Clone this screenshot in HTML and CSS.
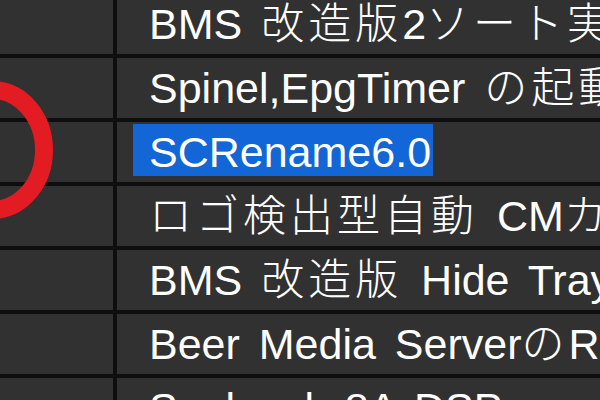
FILE: index.html
```html
<!DOCTYPE html>
<html lang="ja">
<head>
<meta charset="utf-8">
<title>List</title>
<link rel="stylesheet" href="styles.css">
</head>
<body>
<div class="list">
  <div class="row"><div class="c1"></div><div class="c2">BMS <span class="j">改造版</span>2<span class="j">ソート実装</span></div></div>
  <div class="row"><div class="c1"></div><div class="c2">Spinel,EpgTimer <span class="j">の起動</span></div></div>
  <div class="row"><div class="c1"></div><div class="c2"><span class="sel">SCRename6.0</span></div></div>
  <div class="row"><div class="c1"></div><div class="c2"><span class="j">ロゴ検出型自動</span> CM<span class="j">カット</span></div></div>
  <div class="row"><div class="c1"></div><div class="c2">BMS <span class="j">改造版</span> Hide Tray</div></div>
  <div class="row"><div class="c1"></div><div class="c2">Beer Media Server<span class="j">の</span>RSS</div></div>
  <div class="row"><div class="c1"></div><div class="c2">Soulseek 8A DSP</div></div>
</div>
<svg class="mark" width="120" height="260" viewBox="0 0 120 260">
  <ellipse cx="-8" cy="150" rx="52" ry="60" fill="none" stroke="#e31b23" stroke-width="18"/>
</svg>
</body>
</html>
```
FILE: styles.css
```css
html, body {
  margin: 0;
  padding: 0;
  width: 600px;
  height: 400px;
  overflow: hidden;
  background: #313131;
}
body {
  position: relative;
  font-family: "Liberation Sans", "Noto Sans CJK JP", sans-serif;
  color: #ffffff;
}
.list {
  margin-top: -6px;
  display: flex;
  flex-direction: column;
}
.row {
  display: grid;
  grid-template-columns: 117px 1fr;
  height: 64px;
  border-bottom: 4px solid #0e0e0e;
  box-sizing: border-box;
}
.c1 {
  border-right: 4px solid #0e0e0e;
}
.c2 {
  padding-left: 32px;
  font-size: 43px;
  line-height: 60px;
  white-space: nowrap;
  overflow: hidden;
  word-spacing: 7px;
}
.j {
  letter-spacing: 4px;
  font-weight: 300;
}
.sel {
  background: #1266d6;
  padding: 4px 2px 0 16px;
  margin-left: -16px;
}
.mark {
  position: absolute;
  left: 0;
  top: 0;
  pointer-events: none;
}
```
